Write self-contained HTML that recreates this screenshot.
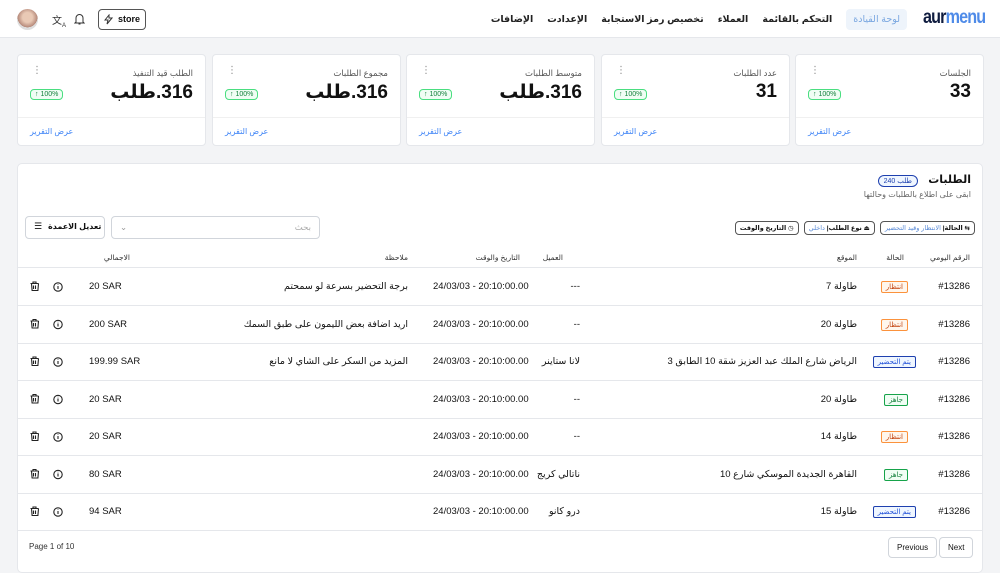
<!DOCTYPE html>
<html><head><meta charset="utf-8">
<style>
*{box-sizing:border-box;margin:0;padding:0}
body{width:1000px;height:563px;overflow:hidden;background:#f3f4f6;font-family:"Liberation Sans","DejaVu Sans",sans-serif;color:#111;position:relative}
.a{position:absolute;white-space:nowrap}
.hdr{left:0;top:0;width:1000px;height:38px;background:#fff;border-bottom:1px solid #e5e7eb}
.navw{right:93px;top:9px;display:flex;flex-direction:row-reverse;gap:14px;align-items:center}
.nav{font-size:9.5px;font-weight:bold;color:#222}
.card{background:#fff;border:1px solid #e5e7eb;border-radius:4px;height:92px;top:54px;width:189px}
.card .t{position:absolute;right:12px;top:13px;font-size:8.5px;color:#555}
.card .v{position:absolute;right:12px;top:26px;font-size:19px;font-weight:bold;color:#111;direction:ltr}
.card .v span{display:inline-block}
.card .b{position:absolute;left:12px;top:34px;font-size:7px;color:#15803d;background:#f0fdf4;border:1px solid #4ade80;border-radius:4px;padding:1px 4px;direction:ltr}
.card .d{position:absolute;left:14px;top:10px;font-size:10px;color:#888}
.card .l{position:absolute;left:0;right:0;top:62px;border-top:1px solid #f0f0f0}
.card .r{position:absolute;left:12px;top:72px;font-size:8px;color:#3b82f6}
.tbl{left:17px;top:163px;width:966px;height:410px;background:#fff;border:1px solid #e5e7eb;border-radius:5px}
.th{font-size:7.5px;color:#333;top:253px}
.row{left:18px;width:964px;height:1px;background:#e5e7eb}
.c{font-size:9.5px;color:#111}
.pills{right:25px;top:221px;display:flex;flex-direction:row-reverse;gap:5px}
.pill{font-size:6.5px;border:1px solid #555;border-radius:4px;padding:2px 4px;background:#fff;direction:rtl;font-weight:bold}
.st{font-size:7px;border-radius:2px;padding:1px 4px}
.w{color:#c2410c;background:#fff7ed;border:1px solid #fb923c}
.p{color:#1d4ed8;background:#eff6ff;border:1px solid #1e40af}
.r2{color:#15803d;background:#f0fdf4;border:1px solid #16a34a}
.btn{font-size:8px;border:1px solid #d1d5db;border-radius:4px;background:#fff;padding:5px 8px}
</style></head><body>
<div class="a hdr"></div>
<div class="a" style="left:17px;top:9px;width:21px;height:21px;border-radius:50%;background:radial-gradient(circle at 50% 40%,#e9c9b5 30%,#b5897a 60%,#ddd 61%)"></div>
<div class="a" style="left:52px;top:12px;font-size:10px;color:#333">文<sub style="font-size:6px">A</sub></div>
<svg class="a" style="left:74px;top:13px" width="11" height="12" viewBox="0 0 11 12"><path d="M2 9V5a3.5 3.5 0 017 0v4l1 1H1z M4.5 11h2" fill="none" stroke="#333" stroke-width="1"/></svg>
<div class="a" style="left:98px;top:9px;width:48px;height:21px;border:1px solid #555;border-radius:4px;font-size:9px;font-weight:bold;padding:4px 0 0 19px">store</div>
<svg class="a" style="left:104px;top:14px" width="9" height="11" viewBox="0 0 9 11"><path d="M5 1L1 6h3l-1 4 5-6H5z" fill="none" stroke="#333" stroke-width="1"/></svg>
<div class="a navw">
<div style="background:#eef4fb;border-radius:4px;padding:5px 7px;font-size:9.5px;color:#7aa7e0">لوحة القيادة</div>
<div class="nav">التحكم بالقائمة</div>
<div class="nav">العملاء</div>
<div class="nav">تخصيص رمز الاستجابة</div>
<div class="nav">الإعدادت</div>
<div class="nav">الإضافات</div>
</div>
<div class="a" style="left:923px;top:7px;font-size:19px;font-weight:bold;letter-spacing:-1px;transform:scaleX(.85);transform-origin:left"><span style="color:#0f1c3f">aur</span><span style="color:#4f8be8">menu</span></div>

<div class="a card" style="left:17px"><div class="d">⋮</div><div class="t">الطلب قيد التنفيذ</div><div class="v"><span>طلب</span><span>.316</span></div><div class="b">↑ 100%</div><div class="l"></div><div class="r">عرض التقرير</div></div>
<div class="a card" style="left:212px"><div class="d">⋮</div><div class="t">مجموع الطلبات</div><div class="v"><span>طلب</span><span>.316</span></div><div class="b">↑ 100%</div><div class="l"></div><div class="r">عرض التقرير</div></div>
<div class="a card" style="left:406px"><div class="d">⋮</div><div class="t">متوسط الطلبات</div><div class="v"><span>طلب</span><span>.316</span></div><div class="b">↑ 100%</div><div class="l"></div><div class="r">عرض التقرير</div></div>
<div class="a card" style="left:601px"><div class="d">⋮</div><div class="t">عدد الطلبات</div><div class="v">31</div><div class="b">↑ 100%</div><div class="l"></div><div class="r">عرض التقرير</div></div>
<div class="a card" style="left:795px"><div class="d">⋮</div><div class="t">الجلسات</div><div class="v">33</div><div class="b">↑ 100%</div><div class="l"></div><div class="r">عرض التقرير</div></div>

<div class="a tbl"></div>
<div class="a" style="right:29px;top:173px;font-size:11px;font-weight:bold">الطلبات</div>
<div class="a" style="right:82px;top:175px;font-size:7px;color:#1e40af;border:1px solid #1e40af;border-radius:6px;padding:1px 5px;background:#eff6ff">240 طلب</div>
<div class="a" style="right:29px;top:190px;font-size:8px;color:#666">ابقى على اطلاع بالطلبات وحالتها</div>
<div class="a pills">
<div class="pill">⇆ الحالة| <span style="color:#5b8bd6;font-weight:normal">الانتظار وقيد التحضير</span></div>
<div class="pill">⏏ نوع الطلب| <span style="color:#5b8bd6;font-weight:normal">داخلي</span></div>
<div class="pill">◷ التاريخ والوقت</div>
</div>
<div class="a" style="left:25px;top:216px;width:80px;height:23px;border:1px solid #d1d5db;border-radius:4px;background:#fff"></div>
<div class="a" style="left:34px;top:221px;font-size:9px">☰</div>
<div class="a" style="left:48px;top:222px;font-size:8px;font-weight:bold">تعديل الاعمدة</div>
<div class="a" style="left:111px;top:216px;width:209px;height:23px;border:1px solid #d1d5db;border-radius:4px;font-size:8.5px;color:#aaa;padding:5px 8px"><span style="float:left;color:#999">⌄</span><span style="float:right">بحث</span></div>
<div class="a row" style="top:267px"></div>
<div class="a th" style="right:30px">الرقم اليومي</div>
<div class="a th" style="right:96px">الحالة</div>
<div class="a th" style="right:143px">الموقع</div>
<div class="a th" style="right:437px">العميل</div>
<div class="a th" style="right:480px">التاريخ والوقت</div>
<div class="a th" style="right:592px">ملاحظة</div>
<div class="a th" style="right:870px">الاجمالي</div>

<div class="a row" style="top:305px"></div><div class="a row" style="top:343px"></div><div class="a row" style="top:380px"></div><div class="a row" style="top:418px"></div><div class="a row" style="top:455px"></div><div class="a row" style="top:493px"></div><div class="a row" style="top:530px"></div>

<div class="a c" style="right:30px;top:281px">#13286</div><div class="a st w" style="right:92px;top:281px">انتظار</div><div class="a c" style="right:143px;top:281px">طاولة 7</div><div class="a c" style="right:420px;top:281px">---</div><div class="a c" style="left:433px;top:281px">24/03/03 - 20:10:00.00</div><div class="a c" style="right:592px;top:281px">برجة التحضير بسرعة لو سمحتم</div><div class="a c" style="left:89px;top:281px">20 SAR</div>
<div class="a c" style="right:30px;top:319px">#13286</div><div class="a st w" style="right:92px;top:319px">انتظار</div><div class="a c" style="right:143px;top:319px">طاولة 20</div><div class="a c" style="right:420px;top:319px">--</div><div class="a c" style="left:433px;top:319px">24/03/03 - 20:10:00.00</div><div class="a c" style="right:592px;top:319px">اريد اضافة بعض الليمون على طبق السمك</div><div class="a c" style="left:89px;top:319px">200 SAR</div>
<div class="a c" style="right:30px;top:356px">#13286</div><div class="a st p" style="right:84px;top:356px">يتم التحضير</div><div class="a c" style="right:143px;top:356px">الرياض شارع الملك عبد العزيز شقة 10 الطابق 3</div><div class="a c" style="right:420px;top:356px">لانا ستاينر</div><div class="a c" style="left:433px;top:356px">24/03/03 - 20:10:00.00</div><div class="a c" style="right:592px;top:356px">المزيد من السكر على الشاي لا مانع</div><div class="a c" style="left:89px;top:356px">199.99 SAR</div>
<div class="a c" style="right:30px;top:394px">#13286</div><div class="a st r2" style="right:92px;top:394px">جاهز</div><div class="a c" style="right:143px;top:394px">طاولة 20</div><div class="a c" style="right:420px;top:394px">--</div><div class="a c" style="left:433px;top:394px">24/03/03 - 20:10:00.00</div><div class="a c" style="left:89px;top:394px">20 SAR</div>
<div class="a c" style="right:30px;top:431px">#13286</div><div class="a st w" style="right:92px;top:431px">انتظار</div><div class="a c" style="right:143px;top:431px">طاولة 14</div><div class="a c" style="right:420px;top:431px">--</div><div class="a c" style="left:433px;top:431px">24/03/03 - 20:10:00.00</div><div class="a c" style="left:89px;top:431px">20 SAR</div>
<div class="a c" style="right:30px;top:469px">#13286</div><div class="a st r2" style="right:92px;top:469px">جاهز</div><div class="a c" style="right:143px;top:469px">القاهرة الجديدة الموسكي شارع 10</div><div class="a c" style="right:420px;top:469px">ناتالي كريج</div><div class="a c" style="left:433px;top:469px">24/03/03 - 20:10:00.00</div><div class="a c" style="left:89px;top:469px">80 SAR</div>
<div class="a c" style="right:30px;top:506px">#13286</div><div class="a st p" style="right:84px;top:506px">يتم التحضير</div><div class="a c" style="right:143px;top:506px">طاولة 15</div><div class="a c" style="right:420px;top:506px">درو كانو</div><div class="a c" style="left:433px;top:506px">24/03/03 - 20:10:00.00</div><div class="a c" style="left:89px;top:506px">94 SAR</div>

<svg class="a" style="left:29px;top:281px" width="36" height="240" viewBox="0 0 36 240">
<g id="ic" fill="none" stroke="#222" stroke-width="1.1"><path d="M1.5 2.5h8M4 2.5V1h3v1.5M2.5 2.5l.6 7h5.8l.6-7M4.5 4.5v3.5M6.5 4.5v3.5"/><circle cx="29" cy="6" r="4.2"/><path d="M29 5v3M29 3.3v.4"/></g>
<use href="#ic" y="37.5"/><use href="#ic" y="75"/><use href="#ic" y="112.5"/><use href="#ic" y="150"/><use href="#ic" y="187.5"/><use href="#ic" y="225"/>
</svg>

<div class="a" style="left:29px;top:542px;font-size:8px;color:#333">Page 1 of 10</div>
<div class="a btn" style="left:888px;top:537px">Previous</div>
<div class="a btn" style="left:939px;top:537px">Next</div>
</body></html>
